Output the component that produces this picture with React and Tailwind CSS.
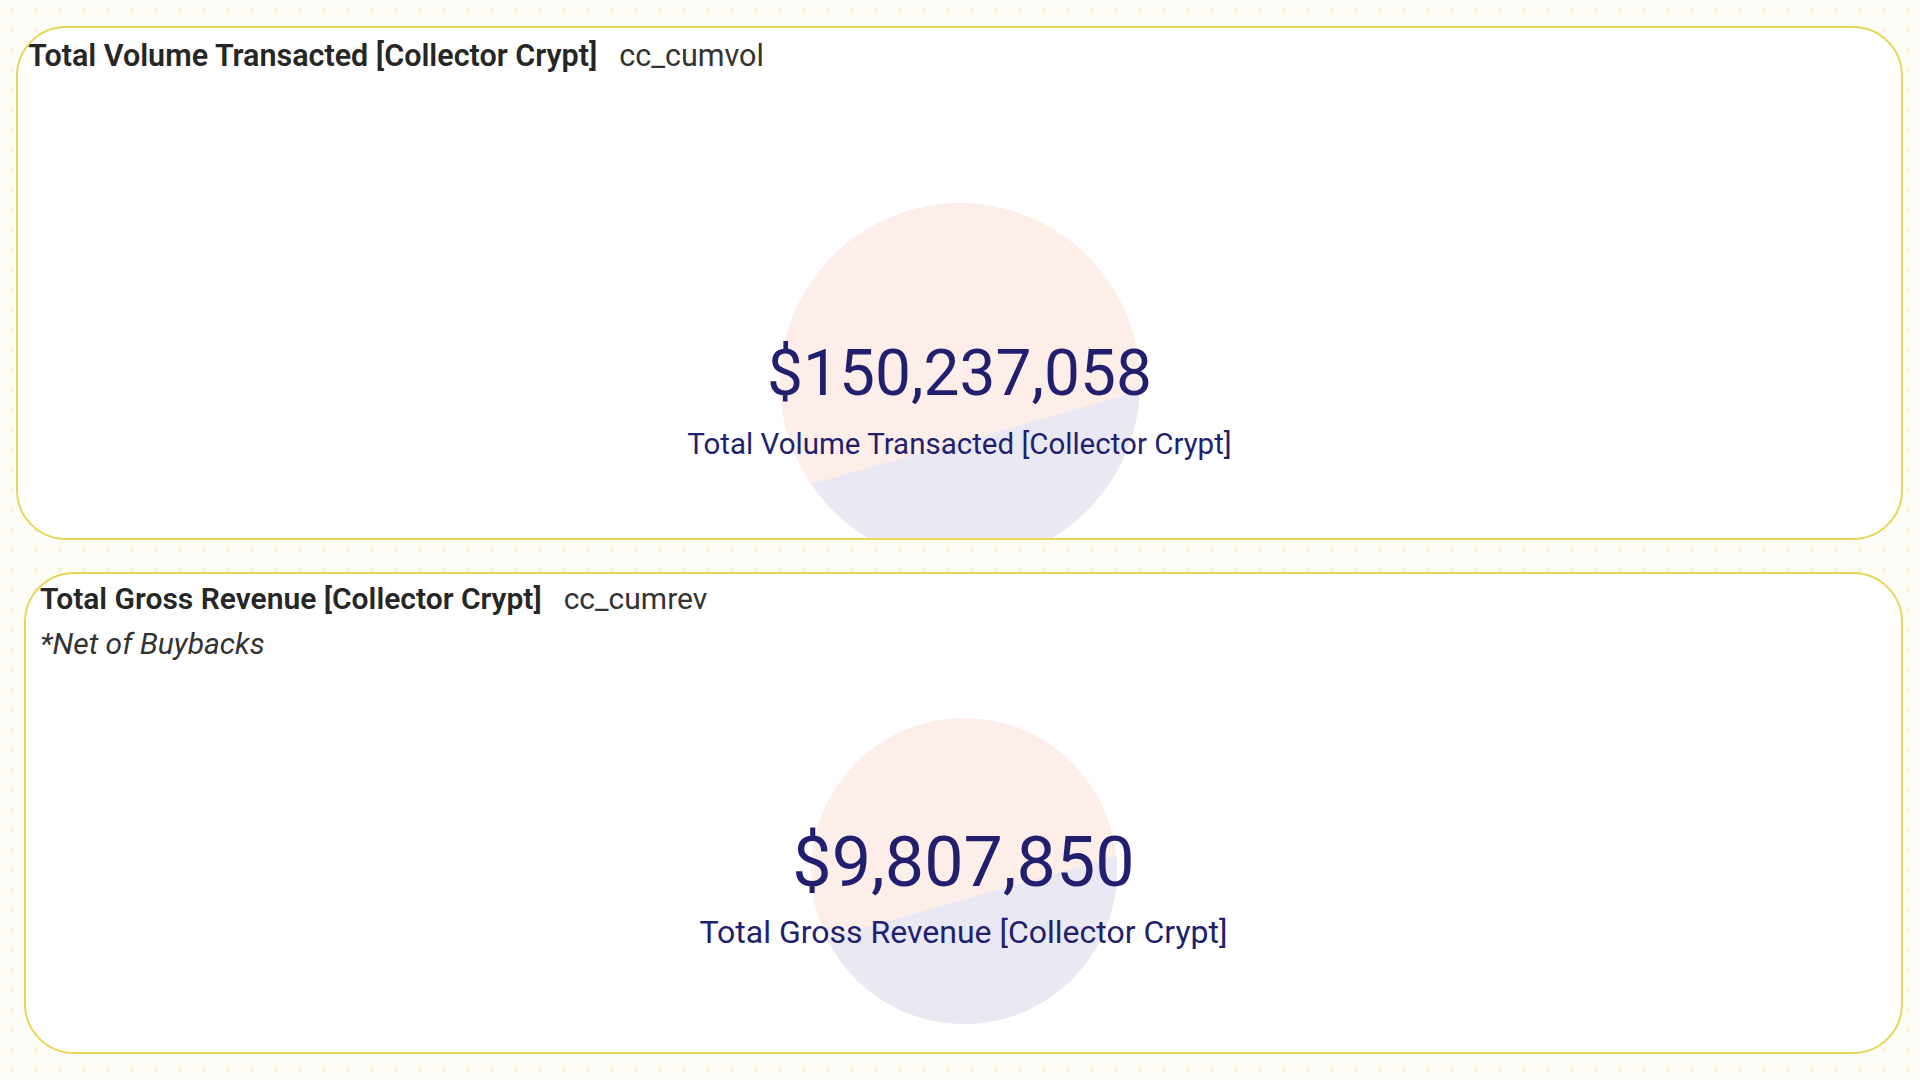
import React from "react";

const PINK = "#fdeee9";
const LAVENDER = "#e9e8f3";

// two-tone disc: pink body with a lavender segment cut off by a chord
// a1 / a2 are the chord end angles in degrees (screen coords, y down)
const Pie = ({ size, a1, a2 }) => {
  const r = size / 2;
  const pt = (deg) => {
    const t = (deg * Math.PI) / 180;
    return [r + r * Math.cos(t), r + r * Math.sin(t)];
  };
  const [x1, y1] = pt(a1);
  const [x2, y2] = pt(a2);
  return (
    <svg width={size} height={size} viewBox={`0 0 ${size} ${size}`} className="block">
      <circle cx={r} cy={r} r={r} fill={PINK} />
      <path d={`M ${x1} ${y1} A ${r} ${r} 0 0 0 ${x2} ${y2} Z`} fill={LAVENDER} />
    </svg>
  );
};

const App = () => {
  return (
    <div
      className="min-h-screen w-full bg-[#fdfcf6] bg-[radial-gradient(circle,transparent_1.5px,#f6f0d3_1.5px,#f6f0d3_2.5px,transparent_2.5px)] bg-size-[24px_20px] pt-[26px] pl-[16px] pr-[17px] pb-[26px] text-[#262626]"
      style={{ fontFamily: "Roboto, 'Liberation Sans', sans-serif" }}
    >
      {/* Volume card */}
      <section className="h-[514px] rounded-[50px] border-2 border-[#e9d55a] bg-white overflow-hidden flex flex-col px-[10px] pt-[10px]">
        <div className="flex items-baseline gap-[22px] text-[30.5px] leading-[36px]">
          <h2 className="font-semibold">Total Volume Transacted [Collector Crypt]</h2>
          <span className="text-[#333]">cc_cumvol</span>
        </div>

        <div className="relative mx-auto mt-[129px] w-[360px] h-[360px] shrink-0">
          <Pie size={360} a1={145.9} a2={2.7} />
          <div className="absolute left-1/2 top-[139px] -translate-x-1/2 flex flex-col items-center whitespace-nowrap text-[#221f6f]">
            <div className="text-[64px] leading-none">$150,237,058</div>
            <div className="mt-[20px] text-[29.5px] leading-[36px]">
              Total Volume Transacted [Collector Crypt]
            </div>
          </div>
        </div>
      </section>

      {/* Revenue card */}
      <section className="mt-[32px] ml-[8px] h-[482px] rounded-[50px] border-2 border-[#e9d55a] bg-white overflow-hidden flex flex-col px-[14px] pt-[7px]">
        <div className="flex items-baseline gap-[22px] text-[30px] leading-[36px]">
          <h2 className="font-semibold">Total Gross Revenue [Collector Crypt]</h2>
          <span className="text-[#333]">cc_cumrev</span>
        </div>
        <p className="mt-[9px] text-[30px] leading-[36px] italic text-[#333]">*Net of Buybacks</p>

        <div className="relative mx-auto mt-[56px] w-[306px] h-[306px] shrink-0">
          <Pie size={306} a1={153.9} a2={-5.5} />
          <div className="absolute left-1/2 top-[109px] -translate-x-1/2 flex flex-col items-center whitespace-nowrap text-[#221f6f]">
            <div className="text-[70px] leading-none">$9,807,850</div>
            <div className="mt-[16px] text-[32px] leading-[38px]">
              Total Gross Revenue [Collector Crypt]
            </div>
          </div>
        </div>
      </section>
    </div>
  );
};

export default App;
